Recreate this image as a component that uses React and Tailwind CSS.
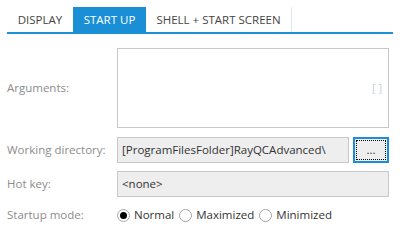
import React from "react";

const Radio = ({ checked, label }) => (
  <label className="flex items-center gap-[4px]">
    <span className="w-[13px] h-[13px] rounded-full border border-[#a8a8a8] bg-white flex items-center justify-center">
      {checked && <span className="w-[7px] h-[7px] rounded-full bg-black" />}
    </span>
    <span className="text-[#333333]">{label}</span>
  </label>
);

const App = () => {
  return (
    <div
      className="w-[400px] h-[248px] bg-white px-[7px] text-[11.5px]"
      style={{ fontFamily: '"Open Sans", "Noto Sans", sans-serif' }}
    >
      {/* Tabs */}
      <div className="pt-[7px] flex border-b-2 border-[#1a8fd6] w-[386px] h-[34px]">
        <div className="w-[66px] flex items-center justify-center text-[#444444]">DISPLAY</div>
        <div className="w-[73px] flex items-center justify-center bg-[#1a8fd6] text-white">START UP</div>
        <div className="w-[146px] flex items-center justify-center text-[#444444] border-r border-[#dde8f2]">
          SHELL + START SCREEN
        </div>
      </div>

      {/* Form */}
      <div className="flex flex-col mt-[14px]">
        <div className="flex items-center h-[80px]">
          <div className="w-[110px] text-[#8c8c8c]">Arguments:</div>
          <div className="w-[272px] h-[80px] border border-[#c8c8c8] bg-white flex items-center justify-end pr-[6px]">
            <span className="text-[#c5cfdc] text-[11px]">[ ]</span>
          </div>
        </div>

        <div className="flex items-center mt-[9px] h-[26px]">
          <div className="w-[110px] text-[#8c8c8c]">Working directory:</div>
          <div className="w-[232px] h-[26px] border border-[#c8c8c8] bg-[#eeeeee] flex items-center pl-[4px] pr-[5px] text-[#333333]">
            [ProgramFilesFolder]RayQCAdvanced\
          </div>
          <button className="ml-[4px] w-[36px] h-[26px] border-2 border-[#1a8fd6] bg-[#eeeeee] p-[1px]">
            <span className="w-full h-full border border-dotted border-black flex items-center justify-center leading-none text-[#333333]">
              ...
            </span>
          </button>
        </div>

        <div className="flex items-center mt-[8px] h-[26px]">
          <div className="w-[110px] text-[#8c8c8c]">Hot key:</div>
          <div className="w-[272px] h-[26px] border border-[#c8c8c8] bg-[#eeeeee] flex items-center pl-[4px] pr-[5px] text-[#333333]">
            &lt;none&gt;
          </div>
        </div>

        <div className="flex items-center mt-[6px] h-[24px]">
          <div className="w-[110px] text-[#8c8c8c]">Startup mode:</div>
          <div className="flex items-center gap-[5px]">
            <Radio checked label="Normal" />
            <Radio label="Maximized" />
            <Radio label="Minimized" />
          </div>
        </div>
      </div>
    </div>
  );
};

export default App;
